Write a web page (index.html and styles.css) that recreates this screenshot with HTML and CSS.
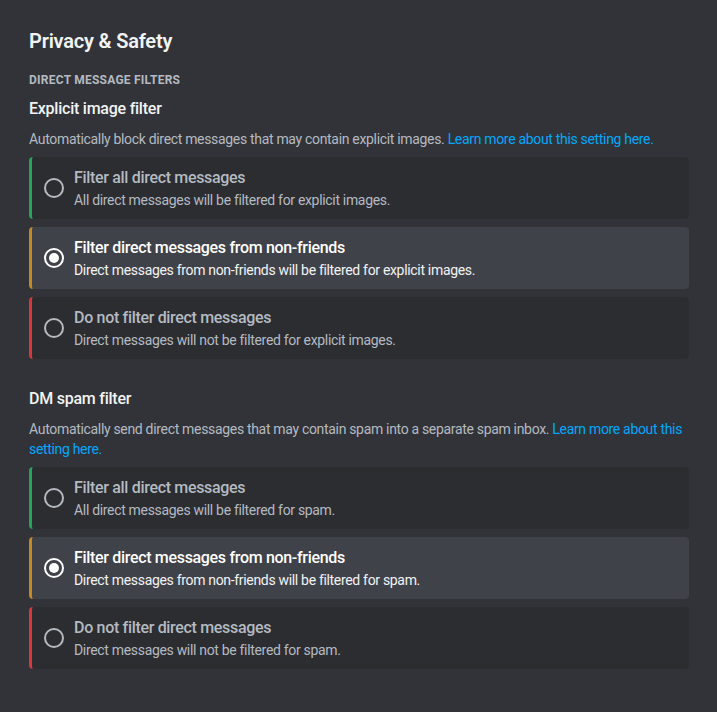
FILE: index.html
```html
<!DOCTYPE html>
<html lang="en">
<head>
<meta charset="utf-8">
<title>Privacy &amp; Safety</title>
<link rel="stylesheet" href="styles.css">
</head>
<body>
<main class="page">
  <h1 class="title">Privacy &amp; Safety</h1>
  <h2 class="eyebrow">Direct Message Filters</h2>

  <section class="group">
    <h3 class="group-title">Explicit image filter</h3>
    <p class="group-desc">Automatically block direct messages that may contain explicit images. <a class="link" href="#">Learn more about this setting here.</a></p>
    <div class="options">
      <div class="option option-green">
        <span class="radio"></span>
        <div class="option-text">
          <div class="option-label">Filter all direct messages</div>
          <div class="option-desc">All direct messages will be filtered for explicit images.</div>
        </div>
      </div>
      <div class="option option-yellow selected">
        <span class="radio"></span>
        <div class="option-text">
          <div class="option-label">Filter direct messages from non-friends</div>
          <div class="option-desc">Direct messages from non-friends will be filtered for explicit images.</div>
        </div>
      </div>
      <div class="option option-red">
        <span class="radio"></span>
        <div class="option-text">
          <div class="option-label">Do not filter direct messages</div>
          <div class="option-desc">Direct messages will not be filtered for explicit images.</div>
        </div>
      </div>
    </div>
  </section>

  <section class="group group-second">
    <h3 class="group-title">DM spam filter</h3>
    <p class="group-desc">Automatically send direct messages that may contain spam into a separate spam inbox. <a class="link" href="#">Learn more about this setting here.</a></p>
    <div class="options">
      <div class="option option-green">
        <span class="radio"></span>
        <div class="option-text">
          <div class="option-label">Filter all direct messages</div>
          <div class="option-desc">All direct messages will be filtered for spam.</div>
        </div>
      </div>
      <div class="option option-yellow selected">
        <span class="radio"></span>
        <div class="option-text">
          <div class="option-label">Filter direct messages from non-friends</div>
          <div class="option-desc">Direct messages from non-friends will be filtered for spam.</div>
        </div>
      </div>
      <div class="option option-red">
        <span class="radio"></span>
        <div class="option-text">
          <div class="option-label">Do not filter direct messages</div>
          <div class="option-desc">Direct messages will not be filtered for spam.</div>
        </div>
      </div>
    </div>
  </section>
</main>
</body>
</html>
```

FILE: styles.css
```css
* { box-sizing: border-box; }

html, body {
  margin: 0;
  padding: 0;
  background: #313338;
  height: 100%;
}

body {
  font-family: Roboto, "Noto Sans", sans-serif;
  color: #b5bac1;
  letter-spacing: -0.02em;
}

.page {
  padding: 29px 28px 40px 29px;
}

.title {
  margin: 0;
  font-size: 20px;
  line-height: 24px;
  font-weight: 600;
  letter-spacing: -0.01em;
  color: #f2f3f5;
}

.eyebrow {
  margin: 19px 0 0;
  font-size: 12px;
  line-height: 16px;
  font-weight: 700;
  text-transform: uppercase;
  letter-spacing: 0.02em;
  color: #b5bac1;
}

.group {
  margin-top: 11px;
}

.group-second {
  margin-top: 30px;
}

.group-title {
  margin: 0;
  font-size: 16px;
  line-height: 20px;
  font-weight: 500;
  letter-spacing: -0.015em;
  color: #f2f3f5;
}

.group-desc {
  margin: 10px 0 8px;
  font-size: 14px;
  line-height: 20px;
  color: #b5bac1;
}

.link {
  color: #00a8fc;
  text-decoration: none;
}

.options {
  display: flex;
  flex-direction: column;
  gap: 8px;
  width: 660px;
}

.option {
  display: flex;
  align-items: center;
  gap: 10px;
  height: 62px;
  padding: 0 12px 0 12px;
  background: #2b2d31;
  border-left: 3px solid transparent;
  border-radius: 4px;
}

.option-green { border-left-color: #23a55a; }
.option-yellow { border-left-color: #c28b22; }
.option-red { border-left-color: #da373c; }

.option.selected { background: #404249; }

.radio {
  flex: none;
  width: 20px;
  height: 20px;
  border: 2px solid #b5bac1;
  border-radius: 50%;
  position: relative;
}

.selected .radio {
  border-color: #ffffff;
}

.selected .radio::after {
  content: "";
  position: absolute;
  left: 3px;
  top: 3px;
  width: 10px;
  height: 10px;
  border-radius: 50%;
  background: #ffffff;
}

.option-text {
  display: flex;
  flex-direction: column;
  gap: 3px;
  padding-top: 1px;
}

.option-label {
  font-size: 16px;
  line-height: 20px;
  font-weight: 500;
  color: #b5bac1;
}

.option-desc {
  font-size: 14px;
  line-height: 18px;
  color: #b5bac1;
}

.selected .option-label {
  color: #ffffff;
}

.selected .option-desc {
  color: #f2f3f5;
}
```
